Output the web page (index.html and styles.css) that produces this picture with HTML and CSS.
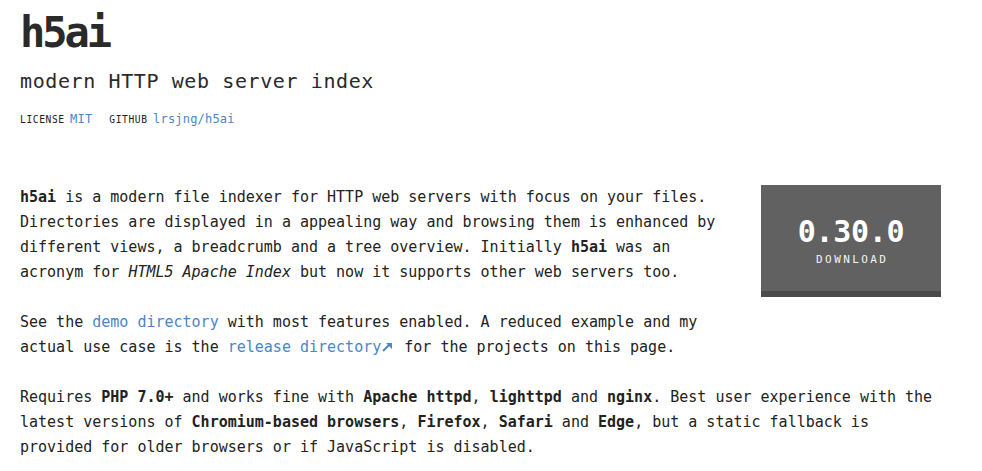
FILE: index.html
```html
<!DOCTYPE html>
<html lang="en">
<head>
<meta charset="utf-8">
<title>h5ai</title>
<link rel="stylesheet" href="styles.css">
</head>
<body>
<div class="page">
  <header class="header">
    <h1 class="title">h5ai</h1>
    <h2 class="subtitle">modern HTTP web server index</h2>
    <div class="meta">
      <span class="meta-label">LICENSE</span> <a class="meta-link" href="#">MIT</a><span class="meta-gap"></span><span class="meta-label">GITHUB</span> <a class="meta-link" href="#">lrsjng/h5ai</a>
    </div>
  </header>
  <main class="content">
    <a class="download" href="#">
      <span class="download-version">0.30.0</span>
      <span class="download-label">DOWNLOAD</span>
    </a>
    <p class="para"><strong>h5ai</strong> is a modern file indexer for HTTP web servers with focus on your files. Directories are displayed in a appealing way and browsing them is enhanced by different views, a breadcrumb and a tree overview. Initially <strong>h5ai</strong> was an acronym for <em>HTML5 Apache Index</em> but now it supports other web servers too.</p>
    <p class="para">See the <a class="link" href="#">demo directory</a> with most features enabled. A reduced example and my actual use case is the <a class="link" href="#">release directory<svg class="ext" width="14" height="10" viewBox="0 0 14 10"><path d="M2 9 L9 2" stroke="#4a86c8" stroke-width="2" fill="none"/><path d="M5 1 L11 1 L11 7 Z" fill="#4a86c8"/></svg></a> for the projects on this page.</p>
    <p class="para">Requires <strong>PHP 7.0+</strong> and works fine with <strong>Apache httpd</strong>, <strong>lighttpd</strong> and <strong>nginx</strong>. Best user experience with the latest versions of <strong>Chromium-based browsers</strong>, <strong>Firefox</strong>, <strong>Safari</strong> and <strong>Edge</strong>, but a static fallback is provided for older browsers or if JavaScript is disabled.</p>
  </main>
</div>
</body>
</html>
```

FILE: styles.css
```css
html, body {
  margin: 0;
  padding: 0;
  background: #fff;
}

body {
  font-family: "DejaVu Sans Mono", "Liberation Mono", monospace;
  color: #222;
}

.page {
  padding: 0 41px 0 20px;
}

.header {
  padding-top: 8px;
}

.title {
  margin: 0;
  font-size: 42px;
  line-height: 50px;
  font-weight: bold;
  letter-spacing: -3px;
  color: #2a2a2a;
}

.subtitle {
  margin: 8px 0 0;
  font-size: 20px;
  line-height: 30px;
  font-weight: normal;
  letter-spacing: 0.6px;
  color: #2a2a2a;
}

.meta {
  margin-top: 13px;
  line-height: 20px;
  font-size: 9px;
}

.meta-label {
  font-size: 9.6px;
  letter-spacing: 0.6px;
  color: #222;
}

.meta-link {
  font-size: 12px;
  letter-spacing: 0.2px;
  color: #4a86c8;
  text-decoration: none;
}

.meta-gap {
  display: inline-block;
  width: 17px;
}

.content {
  margin-top: 55px;
  font-size: 15px;
  line-height: 25px;
}

.para {
  margin: 0 0 25px;
}

.para strong {
  font-weight: bold;
}

.para em {
  font-style: italic;
}

.link {
  color: #4a86c8;
  text-decoration: none;
}

.ext {
  display: inline-block;
  vertical-align: baseline;
}

.download {
  float: right;
  width: 180px;
  height: 76px;
  padding-top: 30px;
  margin: 0 0 30px 30px;
  background: #616161;
  border-bottom: 6px solid #4a4a4a;
  display: flex;
  flex-direction: column;
  align-items: center;
  text-decoration: none;
  color: #fff;
}

.download-version {
  font-size: 30px;
  line-height: 34px;
  font-weight: bold;
  letter-spacing: -0.3px;
}

.download-label {
  margin-top: 4px;
  font-size: 11px;
  line-height: 14px;
  letter-spacing: 2.4px;
  padding-left: 2.4px;
  color: #f4f4f4;
}
```
